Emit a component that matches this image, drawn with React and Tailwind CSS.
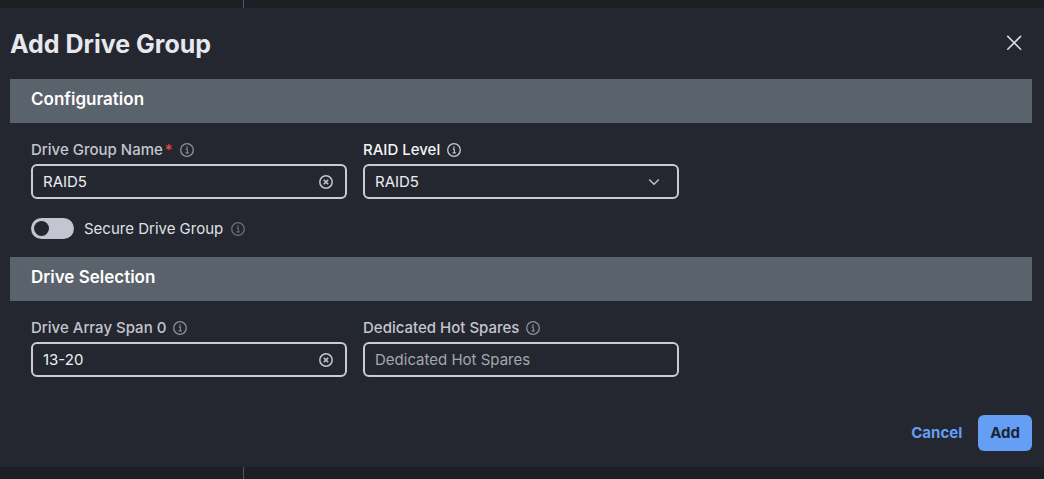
import { useState } from 'react';

function InfoIcon({ className }) {
  return (
    <svg viewBox="0 0 14 14" className={`h-3.5 w-3.5 shrink-0 ${className}`} fill="none" stroke="currentColor" aria-hidden="true">
      <circle cx="7" cy="7" r="6.3" strokeWidth="1.3" />
      <path d="M5.8 6.1h1.5v3.9M5.6 9.9h3.2" strokeWidth="1.1" />
      <circle cx="7" cy="4.1" r="0.8" fill="currentColor" stroke="none" />
    </svg>
  );
}

function ClearIcon() {
  return (
    <svg viewBox="0 0 14 14" className="h-3.5 w-3.5" fill="none" stroke="currentColor" aria-hidden="true">
      <circle cx="7" cy="7" r="6.2" strokeWidth="1.5" />
      <path d="M4.8 4.8l4.4 4.4M9.2 4.8L4.8 9.2" strokeWidth="1.6" />
    </svg>
  );
}

function SectionTitle({ children }) {
  return (
    <h2 className="bg-[#5a626b] px-[21px] pt-2 pb-3 text-[17px] leading-6 font-semibold text-white">
      {children}
    </h2>
  );
}

function FieldLabel({ htmlFor, required, className = 'text-[#c3c6ce]', iconClass = 'text-[#8d9199]', children }) {
  return (
    <div className="flex items-center gap-[7px] text-[15px] leading-5">
      <label htmlFor={htmlFor} className={`font-medium ${className}`}>
        {children}
        {required && <span className="ml-0.5 text-[#e5484d]">*</span>}
      </label>
      <InfoIcon className={iconClass} />
    </div>
  );
}

const control =
  'h-[35px] w-full rounded-md border-2 border-[#c9ccd6] bg-transparent px-2.5 text-[15px] text-[#eceef2] placeholder-[#a3a7b0] outline-none focus:border-[#649ef5]';

function TextField({ id, value, onChange, placeholder }) {
  return (
    <div className="relative mt-1 flex">
      <input id={id} type="text" value={value} placeholder={placeholder} onChange={(e) => onChange(e.target.value)} className={control} />
      {value && (
        <button type="button" aria-label="Clear" onClick={() => onChange('')} className="absolute inset-y-0 right-3.5 cursor-pointer text-[#c3c6ce]">
          <ClearIcon />
        </button>
      )}
    </div>
  );
}

function App() {
  const [name, setName] = useState('RAID5');
  const [level, setLevel] = useState('RAID5');
  const [secure, setSecure] = useState(false);
  const [span, setSpan] = useState('13-20');
  const [spares, setSpares] = useState('');

  return (
    <div className="relative min-h-screen bg-[#1c1f24] py-2 font-['Inter',sans-serif]">
      {/* PAGE BEHIND THE DIALOG */}
      <div className="absolute inset-0 flex" aria-hidden="true">
        <div className="w-[244px] border-r border-[#53565c]"></div>
      </div>

      {/* DIALOG */}
      <form
        role="dialog"
        aria-labelledby="dialog-title"
        onSubmit={(e) => e.preventDefault()}
        className="relative bg-[#24272f] pt-5 pr-3 pb-4 pl-2.5"
      >
        <div className="mb-[19px] flex items-start justify-between">
          <h1 id="dialog-title" className="text-[25px] leading-8 font-bold text-[#e6e8ee]">Add Drive Group</h1>
          <button type="button" aria-label="Close" className="mt-[7px] mr-2.5 cursor-pointer text-[#d5d8df]">
            <svg viewBox="0 0 16 16" className="h-4 w-4" fill="none" stroke="currentColor" strokeWidth="1.6" strokeLinecap="round">
              <path d="M1.8 1.4l12.8 12.8M14.6 1.4L1.8 14.2" />
            </svg>
          </button>
        </div>

        <SectionTitle>Configuration</SectionTitle>
        <div className="px-[21px] pt-[17px] pb-[18px]">
          <div className="grid grid-cols-3 gap-4">
            <div>
              <FieldLabel htmlFor="group-name" required>Drive Group Name</FieldLabel>
              <TextField id="group-name" value={name} onChange={setName} />
            </div>
            <div>
              <FieldLabel htmlFor="raid-level" className="text-[#f4f5f7]" iconClass="text-[#c9ccd6]">RAID Level</FieldLabel>
              <div className="relative mt-1 flex">
                <select id="raid-level" value={level} onChange={(e) => setLevel(e.target.value)} className={`${control} appearance-none pt-0.5`}>
                  <option>RAID0</option>
                  <option>RAID1</option>
                  <option>RAID5</option>
                  <option>RAID6</option>
                </select>
                <svg viewBox="0 0 12 12" className="pointer-events-none absolute top-3 right-[19px] h-3 w-3" fill="none" stroke="#c3c6ce" strokeWidth="1.3" aria-hidden="true">
                  <path d="M1.2 3.5l4.8 4.8 4.8-4.8" />
                </svg>
              </div>
            </div>
          </div>

          <div className="mt-[19px] flex items-center text-[15px] leading-5">
            <input
              id="secure-group"
              type="checkbox"
              role="switch"
              checked={secure}
              onChange={(e) => setSecure(e.target.checked)}
              className="h-[21px] w-[43px] cursor-pointer appearance-none rounded-full bg-[#c3c6d0] p-[3px] before:block before:h-[15px] before:w-[15px] before:rounded-full before:bg-[#24272f] checked:bg-[#649ef5] checked:before:ml-auto"
            />
            <label htmlFor="secure-group" className="mr-2 ml-2.5 text-[#dfe1e6]">Secure Drive Group</label>
            <InfoIcon className="text-[#6b6f78]" />
          </div>
        </div>

        <SectionTitle>Drive Selection</SectionTitle>
        <div className="grid grid-cols-3 gap-4 px-[21px] pt-[17px]">
          <div>
            <FieldLabel htmlFor="span-0">Drive Array Span 0</FieldLabel>
            <TextField id="span-0" value={span} onChange={setSpan} />
          </div>
          <div>
            <FieldLabel htmlFor="hot-spares">Dedicated Hot Spares</FieldLabel>
            <TextField id="hot-spares" value={spares} onChange={setSpares} placeholder="Dedicated Hot Spares" />
          </div>
        </div>

        {/* ACTIONS */}
        <div className="mt-[38px] flex justify-end gap-1 text-[15px] leading-5 font-bold">
          <button type="button" className="cursor-pointer px-3 py-2 text-[#649ef5]">Cancel</button>
          <button type="submit" className="cursor-pointer rounded-md bg-[#649ef5] px-3 py-2 text-[#1c2533]">Add</button>
        </div>
      </form>
    </div>
  );
}

export default App;
